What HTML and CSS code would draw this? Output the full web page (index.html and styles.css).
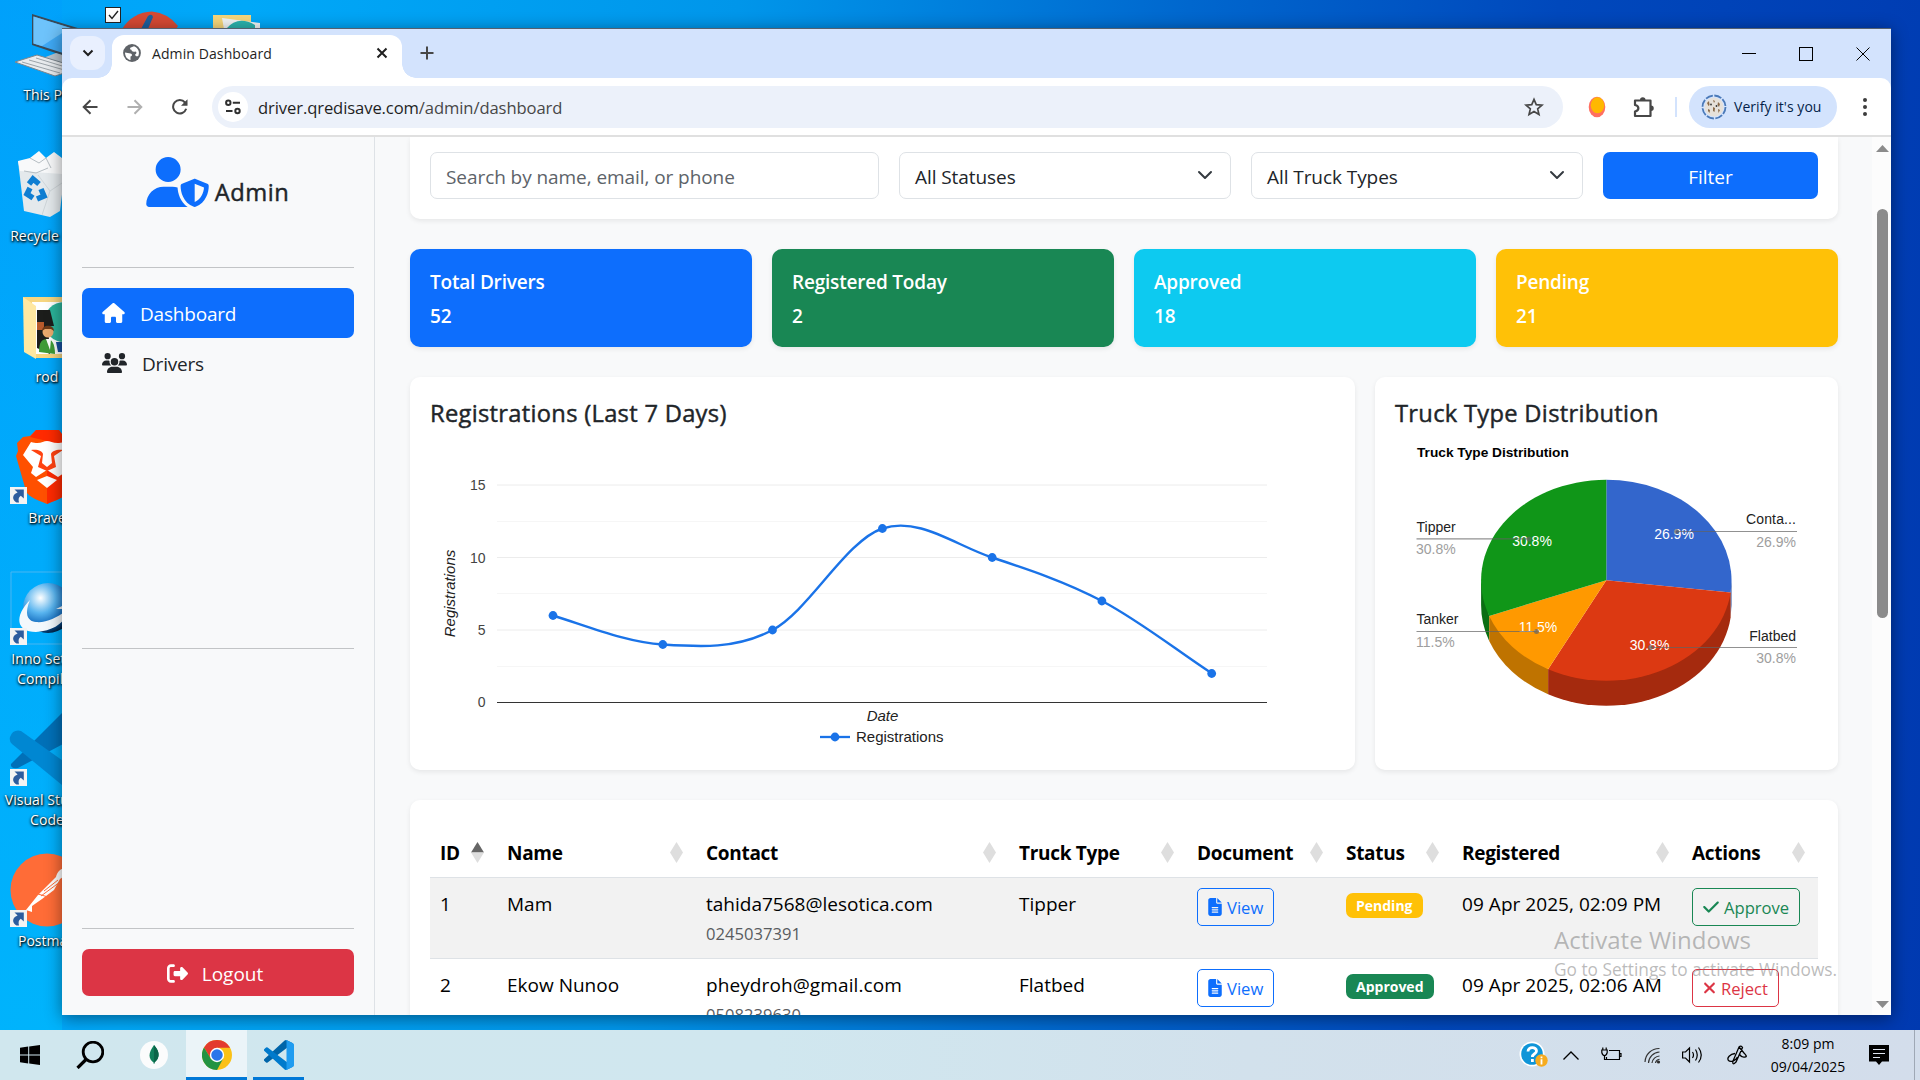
FILE: index.html
```html
<!DOCTYPE html>
<html lang="en">
<head>
<meta charset="utf-8">
<title>Admin Dashboard</title>
<link rel="stylesheet" href="styles.css">
</head>
<body>
<svg class="defs" aria-hidden="true">
  <symbol id="i-shortcut" viewBox="0 0 17 17"><rect width="17" height="17" fill="#f3f3f3"/><path d="M4.500 2.500H13.800V11.500L10.800 8.800C8.500 10.500 8.200 12.300 9 15.500H6.500C3.500 14 2 10.500 4.200 7.800C5 6.700 6.300 5.800 7.600 5.400Z" fill="#2d5c9e"/></symbol>
  <symbol id="i-file" viewBox="0 0 384 512"><path fill="currentColor" d="M64 0C28.700 0 0 28.700 0 64V448c0 35.300 28.700 64 64 64H320c35.300 0 64-28.700 64-64V160H256c-17.700 0-32-14.300-32-32V0H64zM256 0V128H384L256 0zM112 256H272c8.800 0 16 7.200 16 16s-7.200 16-16 16H112c-8.800 0-16-7.200-16-16s7.200-16 16-16zm0 64H272c8.800 0 16 7.200 16 16s-7.200 16-16 16H112c-8.800 0-16-7.200-16-16s7.200-16 16-16zm0 64H272c8.800 0 16 7.200 16 16s-7.200 16-16 16H112c-8.800 0-16-7.200-16-16s7.200-16 16-16z"/></symbol>
  <symbol id="i-sort" viewBox="0 0 13 21"><path fill="#dedede" d="M6.500 0L13 10.500L6.500 21L0 10.500z"/></symbol>
  <symbol id="i-chevron" viewBox="0 0 16 16"><path fill="none" stroke="#343a40" stroke-width="2" stroke-linecap="round" stroke-linejoin="round" d="m2 5 6 6 6-6"/></symbol>
  <symbol id="i-vscode" viewBox="0 0 100 100"><path fill="#0065a9" d="M96.500 10.700L75.900.8a6.200 6.200 0 0 0-7.100 1.200L1.300 63.600a4.200 4.200 0 0 0 0 6.200l5.500 5a4.200 4.200 0 0 0 5.300.2L93.400 13.400c2.700-2.100 6.600-.1 6.600 3.300z"/><path fill="#007acc" d="M96.500 89.300L75.900 99.200a6.200 6.200 0 0 1-7.100-1.200L1.300 36.400a4.200 4.200 0 0 1 0-6.200l5.500-5a4.200 4.200 0 0 1 5.300-.2l81.300 61.600c2.700 2.100 6.600.1 6.600-3.300z"/><path fill="#1f9cf0" d="M75.900 99.200a6.200 6.200 0 0 1-7.200-1.200c2.300 2.300 6.300.7 6.300-2.600V4.600c0-3.300-4-4.900-6.300-2.600a6.200 6.200 0 0 1 7.200-1.200l20.600 9.900A6.200 6.200 0 0 1 100 16.300v67.400a6.200 6.200 0 0 1-3.500 5.600z"/></symbol>
</svg>

<div class="desktop">
  <div class="shortcut" style="top:0">
    <svg class="art" width="94" height="80" viewBox="0 0 94 80"><path d="M32 14L94 33V66L32 45z" fill="#3b4a57"/><path d="M33.500 16.500L94 35V63L33.500 43.500z" fill="#3fa9f5"/><path d="M33.500 16.500L70 28L42 46L33.500 43.500z" fill="#6ec3fb"/><path d="M43 58L56 53L94 65V70z" fill="#b9c3cb"/><path d="M15 62L37 55L80 68L55 76z" fill="#e8ebee" stroke="#7d868d"/><path d="M22 62L60 73M29 60L68 71M36 58L72 69" stroke="#9ba3a9"/></svg>
    <span class="name">This PC</span>
  </div>
  <div class="shortcut" style="top:141px">
    <svg class="art" width="94" height="80" viewBox="0 0 94 80"><path d="M18 20L66 20L60 70L50 76L24 70z" fill="#e4e9ec"/><path d="M18 20L30 17L39 10L46 17L54 11L66 20L62 33L20 30z" fill="#f8f9fa"/><path d="M30 17L39 22L46 17L51 27M24 30L36 32L48 27" fill="none" stroke="#b6bec3"/><path d="M38 34L50 50L42 74M50 50L62 42" stroke="#cfd6da" fill="none"/><g fill="none" stroke="#0f7ed2" stroke-width="5.500"><path d="M29 43L33 38L39 43"/><path d="M41 48L44 55L37 58"/><path d="M33 57L27 53L30 47"/></g></svg>
    <span class="name">Recycle Bin</span>
  </div>
  <div class="shortcut" style="top:282px">
    <svg class="art" width="94" height="80" viewBox="0 0 94 80"><path d="M23 15H70V76H35z" fill="#f7d681"/><path d="M32 20H70V72H34z" fill="#fff"/><circle cx="64" cy="40" r="20" fill="#2bb39a"/><path d="M56 60H70V70H58z" fill="#164f9c"/><path d="M37 28L50 28L54 44H48L50 72L37 66z" fill="#1c1d1b"/><path d="M37 40h7v8h-7z" fill="#b65a2b"/><path d="M39 70C39 60 42 57 47 57S55 62 55 72z" fill="#3f9b37"/><path d="M46 57L50 68L51 57z" fill="#fff"/><circle cx="48" cy="50" r="5.500" fill="#e9a96d"/><path d="M42 49C42 42 54 42 54 49L51 47H45z" fill="#6d3b18"/><path d="M23 15L36 24V77L24 70z" fill="#ffe8a2"/></svg>
    <span class="name">rod</span>
  </div>
  <div class="shortcut" style="top:423px">
    <svg class="art" width="94" height="80" viewBox="0 0 94 80"><path d="M36 7H59L64 14L72 12L78 20L76 28L78 33L69 68C66 74 54 78 47 81C40 78 28 74 26 68L16 33L18 28L17 20L23 14L30 13z" fill="#ff5000"/><path d="M36 7H59L64 14L72 12L78 20L76 28L78 33L69 68C66 74 54 78 47 81V18L30 14z" fill="#ff2000" opacity=".8"/><path d="M31 19C40 22 43 18 47 18S55 22 64 19L71 32L62 44L64 50L58 54L47 47L36 54L31 50L33 44L23 32z" fill="#fff"/><path d="M31 27C38 26 42 28 43 31L42 40L47 44L52 40L51 31C52 28 57 26 63 27L54 33L56 44L47 48L38 44L41 33z" fill="#ff4210"/><path d="M44 30H51L49 40L47 42L44 40z" fill="#fff"/><path d="M37 57L47 53L57 57L47 65z" fill="#fff"/></svg>
    <svg class="arrow"><use href="#i-shortcut"/></svg>
    <span class="name">Brave</span>
  </div>
  <div class="shortcut" style="top:564px">
    <svg class="art" width="94" height="80" viewBox="0 0 94 80"><defs><radialGradient id="orb" cx=".35" cy=".3" r=".75"><stop offset="0" stop-color="#fff"/><stop offset=".4" stop-color="#58b4ef"/><stop offset=".75" stop-color="#0a62b8"/><stop offset="1" stop-color="#001c38"/></radialGradient></defs><path d="M11 8H94M11 8V80H94" fill="none" stroke="#49b6f2"/><circle cx="48" cy="44" r="25" fill="url(#orb)"/><path d="M30 36C14 52 16 68 36 68C52 67 62 60 66 52L62 45H56L66 40V47C56 54 46 59 36 58C26 57 25 48 30 36z" fill="#f3f8fc"/></svg>
    <svg class="arrow"><use href="#i-shortcut"/></svg>
    <span class="name">Inno Setup<br>Compiler</span>
  </div>
  <div class="shortcut" style="top:705px">
    <svg class="art" width="94" height="80" viewBox="0 0 94 80"><path d="M11 59L62 8L80 16V30L18 63Q10 64 11 59z" fill="#0070b8"/><path d="M10 32Q13 24 21 26L80 68V84L62 80L12 39Q9 36 10 32z" fill="#0087d2"/></svg>
    <svg class="arrow"><use href="#i-shortcut"/></svg>
    <span class="name">Visual Studio<br>Code</span>
  </div>
  <div class="shortcut" style="top:846px">
    <svg class="art" width="94" height="80" viewBox="0 0 94 80"><circle cx="47" cy="44" r="36.500" fill="#ff6c37"/><path d="M26 64L38 49L56 31C58 22 66 20 72 25L60 33L54 44L42 53L32 60L32 66z" fill="#fff"/><path d="M38 48L48 51M44 45L58 34M41 50L60 36" stroke="#ff6c37" fill="none"/></svg>
    <svg class="arrow"><use href="#i-shortcut"/></svg>
    <span class="name">Postman</span>
  </div>
  <svg class="behind" width="180" height="29" viewBox="0 0 180 29"><rect x="5.500" y="7.500" width="15" height="15" fill="#fff" stroke="#222"/><path d="M9 15L12 18.500L18 11" fill="none" stroke="#222" stroke-width="1.400"/><path d="M22 29Q33 12 52 11.500Q68 13 78 26L76 29z" fill="#d64a34"/><path d="M48 16Q52 13 53 17L48 29H41z" fill="#1b5f9e"/><path d="M113 15H151V29H113z" fill="#f5d67b"/><path d="M122 18L160 23V29H124z" fill="#f2f4f5"/><path d="M126 29Q138 15 155 25V29z" fill="#2ab3ae"/></svg>
</div>

<div class="window">
  <div class="tabstrip">
    <div class="tab-search"><svg width="12" height="8" viewBox="0 0 12 8"><path d="M1.500 1.500L6 6L10.500 1.500" fill="none" stroke="#1f1f1f" stroke-width="2"/></svg></div>
    <div class="tab">
      <svg width="18" height="18" viewBox="0 0 18 18"><circle cx="9" cy="9" r="8.900" fill="#5f6368"/><path d="M2 8.500L7.500 9.500C9.500 10 9.500 12 7.500 12.500V16C4 15.500 2 12 2 8.500zM11 2.300L8.500 3.200C6.500 3.500 6.800 5.700 8.500 5.800C8.500 8 11 8 12.500 7.500C14 8 13.500 10 12 10.500C12.500 12.500 14 12.500 15.300 12C17 8.500 15.500 4 11 2.300z" fill="#fff"/></svg>
      <span class="tab-title">Admin Dashboard</span>
      <svg width="12" height="12" viewBox="0 0 12 12"><path d="M1.500 1.500L10.500 10.500M10.500 1.500L1.500 10.500" stroke="#1f1f1f" stroke-width="2"/></svg>
    </div>
    <svg class="new-tab" width="14" height="14" viewBox="0 0 14 14"><path d="M7 .5V13.500M.5 7H13.500" stroke="#474747" stroke-width="2"/></svg>
    <div class="controls">
      <svg width="14" height="14"><path d="M0 6.500H14" stroke="#000"/></svg>
      <svg width="14" height="14"><rect x=".5" y=".5" width="13" height="13" fill="none" stroke="#000"/></svg>
      <svg width="14" height="14"><path d="M.5 .5L13.500 13.500M13.500 .5L.5 13.500" stroke="#000"/></svg>
    </div>
  </div>

  <div class="toolbar">
    <div class="nav">
      <svg width="16" height="16" viewBox="0 0 16 16"><path d="M15.500 8H2M8.500 1.200L1.700 8L8.500 14.800" fill="none" stroke="#474747" stroke-width="2"/></svg>
      <svg width="16" height="16" viewBox="0 0 16 16"><path d="M.5 8H14M7.500 1.200L14.300 8L7.500 14.800" fill="none" stroke="#b0b0b0" stroke-width="2"/></svg>
      <svg width="16" height="16" viewBox="0 0 16 16"><path d="M14.200 9.800A6.700 6.700 0 1 1 13 3.500L14.500 5.500" fill="none" stroke="#474747" stroke-width="2"/><path d="M15.500 .3V6.800H9z" fill="#474747"/></svg>
    </div>
    <div class="omnibox">
      <div class="site-info"><svg width="16" height="16" viewBox="0 0 16 16" fill="none" stroke="#303030" stroke-width="2"><circle cx="3.300" cy="3.700" r="2.200"/><path d="M7.800 3.700H15M1 12H7.500"/><circle cx="12.500" cy="12" r="2.200"/></svg></div>
      <span class="url">driver.qredisave.com<span>/admin/dashboard</span></span>
      <svg width="20" height="20" viewBox="0 0 24 24"><path d="M12 2.800L14.700 9.200L21.600 9.800L16.400 14.300L18 21L12 17.400L6 21L7.600 14.300L2.400 9.800L9.300 9.200z" fill="none" stroke="#474747" stroke-width="2"/></svg>
    </div>
    <svg class="ext" width="18" height="22" viewBox="0 0 18 22"><ellipse cx="9" cy="11" rx="8.300" ry="10.300" fill="#ff6f61"/><ellipse cx="9.500" cy="9.300" rx="6.800" ry="8" fill="#ffb800"/></svg>
    <svg class="puzzle" width="22" height="22" viewBox="0 0 22 22"><path d="M2 4.500H17.500V20H2V15.500C6.500 14.500 6.500 10 2 9z" fill="none" stroke="#474747" stroke-width="2.200" stroke-linejoin="round"/><path d="M7 4A2.700 2.700 0 0 1 12.500 4zM18 9.500A2.700 2.700 0 0 1 18 15z" fill="#474747"/></svg>
    <i class="sep"></i>
    <div class="profile">
      <svg width="26" height="26" viewBox="0 0 26 26"><circle cx="13" cy="13" r="9.500" fill="#e6e1da"/><path d="M6 9L8 7L8.500 11L7.500 12zM12 6L14 7L13 9zM17 8L19 10L18 13L16.500 11zM7 15L9 16L8.500 19L7 17zM12 13L14 14L13.500 18L12 17zM17 15L19 16L17.500 19z" fill="#8a6a49"/><circle cx="10" cy="10.500" r=".9" fill="#333"/><circle cx="15.500" cy="12" r=".9" fill="#333"/><circle cx="13" cy="13" r="11.500" fill="none" stroke="#4a79b8" stroke-width="1.800" stroke-dasharray="7.500 1.530"/></svg>
      <span>Verify it's you</span>
    </div>
    <svg class="kebab" width="4" height="18" viewBox="0 0 4 18" fill="#3c3c3c"><circle cx="2" cy="2" r="2"/><circle cx="2" cy="9" r="2"/><circle cx="2" cy="16" r="2"/></svg>
  </div>

  <div class="page">
    <aside class="sidebar">
      <div class="brand">
        <svg width="63" height="50" viewBox="0 0 640 512"><path fill="#0d6efd" d="M224 256A128 128 0 1 0 224 0a128 128 0 1 0 0 256zm-45.700 48C79.800 304 0 383.800 0 482.300C0 498.700 13.300 512 29.700 512H418.300c1.800 0 3.500-.2 5.300-.5c-76.300-55.100-99.800-141-103.100-200.200c-16.100-4.800-33.100-7.300-50.700-7.300H178.300zm308.800-78.300l-120 48C358 277.400 352 286.200 352 296c0 63.300 25.900 168.800 134.800 214.200c5.900 2.500 12.600 2.500 18.500 0C614.100 464.800 640 359.300 640 296c0-9.800-6-18.600-15.100-22.300l-120-48c-5.700-2.300-12.100-2.300-17.800 0zM591.400 312c-3.900 50.700-27.200 116.700-95.400 149.700V273.800L591.400 312z"/></svg>
        <span>Admin</span>
      </div>
      <hr>
      <nav class="menu">
        <a class="active"><svg width="23" height="20" viewBox="0 0 576 512"><path fill="currentColor" d="M575.800 255.500c0 18-15 32.100-32 32.100h-32l.7 160.200c0 2.700-.2 5.400-.5 8.100V472c0 22.100-17.900 40-40 40H456c-1.100 0-2.200 0-3.300-.1c-1.400 .1-2.800 .1-4.200 .1H416 392c-22.100 0-40-17.900-40-40V448 384c0-17.700-14.300-32-32-32H256c-17.700 0-32 14.300-32 32v64 24c0 22.100-17.900 40-40 40H160 128.100c-1.500 0-3-.1-4.500-.2c-1.200 .1-2.400 .2-3.600 .2H104c-22.100 0-40-17.900-40-40V360c0-.9 0-1.900 .1-2.800V287.600H32c-18 0-32-14-32-32.100c0-9 3-17 10-24L266.400 8c7-7 15-8 22-8s15 2 21 7L564.800 231.500c8 7 12 15 11 24z"/></svg>Dashboard</a>
        <a><svg width="25" height="20" viewBox="0 0 640 512"><path fill="#212529" d="M144 0a80 80 0 1 1 0 160A80 80 0 1 1 144 0zM512 0a80 80 0 1 1 0 160A80 80 0 1 1 512 0zM0 298.700C0 239.800 47.800 192 106.700 192h42.700c15.900 0 31 3.500 44.600 9.700c-1.300 7.200-1.900 14.700-1.900 22.300c0 38.200 16.800 72.500 43.300 96c-.2 0-.4 0-.7 0H21.300C9.600 320 0 310.400 0 298.700zM405.300 320c-.2 0-.4 0-.7 0c26.600-23.500 43.300-57.800 43.300-96c0-7.600-.7-15-1.900-22.300c13.600-6.300 28.700-9.700 44.600-9.700h42.700C592.200 192 640 239.800 640 298.700c0 11.800-9.600 21.300-21.300 21.300H405.300zM224 224a96 96 0 1 1 192 0 96 96 0 1 1 -192 0zM128 485.300C128 411.700 187.700 352 261.300 352H378.700C452.300 352 512 411.700 512 485.300c0 14.700-11.900 26.700-26.700 26.700H154.700c-14.700 0-26.700-11.900-26.700-26.700z"/></svg>Drivers</a>
      </nav>
      <hr class="mid">
      <hr class="low">
      <button class="logout"><svg width="21" height="21" viewBox="0 0 512 512"><path fill="#fff" d="M377.900 105.900L500.700 228.700c7.200 7.200 11.300 17.100 11.300 27.300s-4.100 20.100-11.300 27.300L377.900 406.100c-6.400 6.400-15 9.900-24 9.900c-18.700 0-33.900-15.200-33.900-33.900l0-62.100-128 0c-17.700 0-32-14.300-32-32l0-64c0-17.700 14.300-32 32-32l128 0 0-62.100c0-18.700 15.200-33.900 33.900-33.900c9 0 17.600 3.600 24 9.900zM160 96L96 96c-17.700 0-32 14.300-32 32l0 256c0 17.700 14.300 32 32 32l64 0c17.700 0 32 14.300 32 32s-14.300 32-32 32l-64 0c-53 0-96-43-96-96L0 128C0 75 43 32 96 32l64 0c17.700 0 32 14.300 32 32s-14.300 32-32 32z"/></svg>Logout</button>
    </aside>

    <main class="main">
      <section class="card filters">
        <div class="field search">Search by name, email, or phone</div>
        <div class="field">All Statuses<svg width="16" height="16"><use href="#i-chevron"/></svg></div>
        <div class="field">All Truck Types<svg width="16" height="16"><use href="#i-chevron"/></svg></div>
        <button class="filter-btn">Filter</button>
      </section>

      <section class="stats">
        <div class="stat blue"><span>Total Drivers</span><span>52</span></div>
        <div class="stat green"><span>Registered Today</span><span>2</span></div>
        <div class="stat cyan"><span>Approved</span><span>18</span></div>
        <div class="stat amber"><span>Pending</span><span>21</span></div>
      </section>

      <section class="charts">
        <div class="card chart">
          <h5>Registrations (Last 7 Days)</h5>
          <svg width="905" height="313" viewBox="430 437 905 313">
            <g stroke="#ececec"><path d="M497 485H1267M497 557.500H1267M497 630H1267"/></g>
            <g stroke="#f6f6f6"><path d="M497 521.500H1267M497 593.500H1267M497 666.500H1267"/></g>
            <path d="M497 702.500H1267" stroke="#333" stroke-width="1.200"/>
            <path d="M553 615.500C589.600 627 626.400 642.100 663 644.500C699.600 646.900 735.900 649.300 772.500 630C809.100 610.700 845.900 540.600 882.500 528.500C919 516.400 955.400 545.400 992 557.500C1028.600 569.500 1065.400 581.700 1102 601C1138.700 620.300 1175.300 649.300 1212 673.500" fill="none" stroke="#1a73e8" stroke-width="2.400"/>
            <g fill="#1a73e8"><circle cx="553" cy="615.500" r="4.400"/><circle cx="662.800" cy="644.500" r="4.400"/><circle cx="772.500" cy="630" r="4.400"/><circle cx="882.400" cy="528.500" r="4.400"/><circle cx="992.200" cy="557.500" r="4.400"/><circle cx="1101.900" cy="601" r="4.400"/><circle cx="1211.700" cy="673.500" r="4.400"/></g>
            <g class="axis" text-anchor="end"><text x="485.500" y="490">15</text><text x="485.500" y="562.500">10</text><text x="485.500" y="635">5</text><text x="485.500" y="707">0</text></g>
            <g class="lbl ital" text-anchor="middle"><text x="882.500" y="721">Date</text><text transform="translate(455 593.500) rotate(-90)">Registrations</text></g>
            <path d="M820 737H850" stroke="#1a73e8" stroke-width="2.300"/><circle cx="835" cy="737" r="4.400" fill="#1a73e8"/>
            <text class="lbl" x="856" y="742">Registrations</text>
          </svg>
        </div>
        <div class="card pie">
          <h5>Truck Type Distribution</h5>
          <svg width="423" height="313" viewBox="1395.500 437 423 313">
            <path d="M1481.600 580V605A125.200 100.500 0 0 0 1489.700 641V616z" fill="#0b6e13"/>
            <path d="M1732 580V605L1731.100 617V592z" fill="#264d99"/>
            <path d="M1489.700 615.900V640.900A125.200 100.500 0 0 0 1548.600 694.300V669.300z" fill="#bf7300"/>
            <path d="M1548.600 669.300V694.300A125.200 100.500 0 0 0 1731.100 617.400V592.400z" fill="#a52a0e"/>
            <path d="M1606.800 580.300V479.800A125.200 100.500 0 0 1 1731.100 592.400z" fill="#36c"/>
            <path d="M1606.800 580.300L1731.100 592.400A125.200 100.500 0 0 1 1548.600 669.300z" fill="#dc3912"/>
            <path d="M1606.800 580.300L1548.600 669.300A125.200 100.500 0 0 1 1489.700 615.900z" fill="#f90"/>
            <path d="M1606.800 580.300L1489.700 615.900A125.200 100.500 0 0 1 1606.800 479.800z" fill="#109618"/>
            <text class="pt bold" x="1417.500" y="457">Truck Type Distribution</text>
            <g class="pt white" text-anchor="middle"><text x="1532.500" y="546">30.8%</text><text x="1674.500" y="539">26.9%</text><text x="1538.500" y="632">11.5%</text><text x="1650" y="650">30.8%</text></g>
            <g stroke="#636363" stroke-opacity=".7" stroke-width="1.200" fill="none"><path d="M1417 538.800H1529M1417 631.500H1537M1677 531.500H1797.500M1651 647.500H1797.500"/></g>
            <g fill="#636363" fill-opacity=".7"><circle cx="1529.500" cy="539" r="2.500"/><circle cx="1537" cy="631.500" r="2.500"/><circle cx="1677" cy="531.500" r="2.500"/><circle cx="1651" cy="647.500" r="2.500"/></g>
            <g class="pt"><text x="1417" y="532">Tipper</text><text x="1417" y="624">Tanker</text><text x="1796.500" y="524" text-anchor="end" textLength="50">Conta...</text><text x="1796.500" y="641" text-anchor="end">Flatbed</text></g>
            <g class="pt grey"><text x="1416.500" y="554">30.8%</text><text x="1416.500" y="647">11.5%</text><text x="1796.500" y="547" text-anchor="end">26.9%</text><text x="1796.500" y="663" text-anchor="end">30.8%</text></g>
          </svg>
        </div>
      </section>

      <section class="card listing">
        <div class="row head">
          <span>ID<svg class="sort" viewBox="0 0 13 21"><path d="M6.500 0L13 10.500H0z" fill="#666"/><path d="M0 10.500H13L6.500 21z" fill="#dedede"/></svg></span>
          <span>Name<svg class="sort"><use href="#i-sort"/></svg></span>
          <span>Contact<svg class="sort"><use href="#i-sort"/></svg></span>
          <span>Truck Type<svg class="sort"><use href="#i-sort"/></svg></span>
          <span>Document<svg class="sort"><use href="#i-sort"/></svg></span>
          <span>Status<svg class="sort"><use href="#i-sort"/></svg></span>
          <span>Registered<svg class="sort"><use href="#i-sort"/></svg></span>
          <span>Actions<svg class="sort"><use href="#i-sort"/></svg></span>
        </div>
        <div class="row odd">
          <span>1</span><span>Mam</span>
          <span><span class="mail">tahida7568@lesotica.com</span><small>0245037391</small></span>
          <span>Tipper</span>
          <span><a class="btn view"><svg width="14" height="18"><use href="#i-file"/></svg>View</a></span>
          <span><b class="badge amber">Pending</b></span>
          <span class="date">09 Apr 2025, 02:09 PM</span>
          <span><a class="btn ok"><svg width="16" height="18" viewBox="0 0 448 512"><path fill="currentColor" d="M438.600 105.400c12.500 12.500 12.500 32.800 0 45.300l-256 256c-12.500 12.500-32.800 12.500-45.300 0l-128-128c-12.500-12.500-12.500-32.800 0-45.300s32.800-12.500 45.300 0L160 338.700 393.400 105.400c12.500-12.500 32.800-12.500 45.300 0z"/></svg>Approve</a></span>
        </div>
        <div class="row">
          <span>2</span><span>Ekow Nunoo</span>
          <span><span class="mail wide">pheydroh@gmail.com</span><small>0508239630</small></span>
          <span>Flatbed</span>
          <span><a class="btn view"><svg width="14" height="18"><use href="#i-file"/></svg>View</a></span>
          <span><b class="badge green">Approved</b></span>
          <span class="date">09 Apr 2025, 02:06 AM</span>
          <span><a class="btn no"><svg width="13" height="18" viewBox="0 0 384 512"><path fill="currentColor" d="M342.600 150.600c12.500-12.500 12.500-32.800 0-45.300s-32.800-12.500-45.300 0L192 210.700 86.600 105.400c-12.500-12.500-32.800-12.500-45.300 0s-12.500 32.800 0 45.300L146.700 256 41.400 361.400c-12.500 12.500-12.500 32.800 0 45.300s32.800 12.500 45.300 0L192 301.300 297.400 406.600c12.500 12.500 32.800 12.500 45.300 0s12.500-32.800 0-45.300L237.300 256 342.600 150.600z"/></svg>Reject</a></span>
        </div>
      </section>
    </main>

    <div class="scrollbar">
      <svg width="13" height="7"><path d="M6.500 0L13 7H0z" fill="#8b8b8b"/></svg>
      <i></i>
      <svg width="13" height="7"><path d="M0 0H13L6.500 7z" fill="#8b8b8b"/></svg>
    </div>
  </div>
</div>

<div class="watermark"><p>Activate Windows</p><p>Go to Settings to activate Windows.</p></div>

<footer class="taskbar">
  <div class="task start"><svg width="20" height="20" viewBox="0 0 20 20"><path d="M0 2.800L8.200 1.600V9.400H0zM9.200 1.400L20 0V9.400H9.200zM0 10.400H8.200V18.400L0 17.200zM9.200 10.400H20V20L9.200 18.500z"/></svg></div>
  <div class="task find"><svg width="28" height="28" viewBox="0 0 28 28" fill="none" stroke="#000"><circle cx="17" cy="11" r="9.800" stroke-width="2.800"/><path d="M10 18.500L1.500 27" stroke-width="3.200"/></svg></div>
  <div class="task mongo"><svg width="28" height="28" viewBox="0 0 28 28"><circle cx="14" cy="14" r="14" fill="#fbfcfc"/><path d="M14 4C18 8.500 19 12 18.500 15C18 18.500 16 20 14.500 21.500L14.200 23H13.800L13.500 21.500C11.500 20 9.500 18 9.500 14.500S11.500 7.500 14 4z" fill="#10805a"/><path d="M14 4C18 8.500 19 12 18.500 15C18 18.500 16 20 14.500 21.500L14 23z" fill="#0b6548"/></svg></div>
  <div class="task chrome"><svg width="30" height="30" viewBox="0 0 48 48"><circle cx="24" cy="24" r="24" fill="#fbc116"/><path d="M24 12.500H45A24 24 0 0 0 3.200 12L14 29.700z" fill="#e33b2e"/><path d="M3.200 12A24 24 0 0 0 24 48L34 29.700H14z" fill="#229342"/><circle cx="24" cy="24" r="11.500" fill="#fff"/><circle cx="24" cy="24" r="9.200" fill="#2a75ea"/></svg></div>
  <div class="task code"><svg width="30" height="30"><use href="#i-vscode"/></svg></div>
  <div class="tray">
    <svg class="help" width="30" height="28" viewBox="0 0 30 28"><circle cx="13" cy="13" r="12.500" fill="#fff"/><circle cx="13" cy="13" r="10.800" fill="#0f95d8"/><path d="M9 10.500C9 5.500 17.500 5.500 17.500 10C17.500 13 13.400 12.500 13.400 16M13.400 18V21" fill="none" stroke="#fff" stroke-width="2.800"/><circle cx="22.500" cy="19.500" r="6.200" fill="#f6ab1e"/><path d="M22.500 15.500V17.200M22.500 18.300V23.500" stroke="#fff" stroke-width="1.800"/></svg>
    <svg class="t2" width="16" height="9" viewBox="0 0 16 9"><path d="M.5 8.500L8 1L15.500 8.500" fill="none" stroke="#000" stroke-width="1.300"/></svg>
    <svg class="t3" width="21" height="16" viewBox="0 0 21 16" fill="none" stroke="#000" stroke-width="1.200"><path d="M8 3.500H18.500V12.500H5.500V10M18.500 6.500H20V9.500H18.500M1.800 .5V3M5.200 .5V3M3.500 8.500V12.500H6"/><path d="M.8 3H6.200V5.500Q5.500 8.500 3.500 8.500T.8 5.500z"/></svg>
    <svg class="t4" width="17" height="17" viewBox="0 0 17 17" fill="none" stroke="#333" stroke-width="1.200"><path d="M1 15A14 14 0 0 1 15.500 1.500M4.500 16A11.500 11.500 0 0 1 15.500 5M8 16A8 8 0 0 1 15.500 9M11.500 16A4.500 4.500 0 0 1 15.500 12.300"/><circle cx="14.500" cy="15" r="1" fill="#000"/></svg>
    <svg class="t5" width="21" height="18" viewBox="0 0 21 18" fill="none" stroke="#000" stroke-width="1.200"><path d="M.6 6H3.500L7.500 2V16L3.500 12H.6zM10.500 6Q12.500 9 10.500 12M13.500 3.500Q17 9 13.500 14.500M16.500 1.500Q22 9 16.500 16.500"/></svg>
    <svg class="t6" width="21" height="20" viewBox="0 0 21 20" fill="none" stroke="#000" stroke-width="1.300"><path d="M6 16L12 2Q14 0 15.500 2.500L9 17Q5 21 6 16zM12 2L17 8Q21 12 18 12Q15 13 12 9M8 8.500C3 9 -.5 13 1.500 15.500C4 18 9 15 10.500 12"/></svg>
    <div class="clock"><span>8:09 pm</span><span>09/04/2025</span></div>
    <svg class="note" width="20" height="20" viewBox="0 0 20 20"><path d="M0 0H20V16.500H13L10 20L7 16.500H0z"/><path d="M4 4.500H16M4 8.500H16M4 12.500H11" stroke="#dde3ee" stroke-width="1.200"/></svg>
    <i class="peek"></i>
  </div>
</footer>
</body>
</html>
```
FILE: styles.css
```css
* { box-sizing: border-box; }
body {
  margin: 0;
  width: 1920px;
  height: 1080px;
  overflow: hidden;
  position: relative;
  font-family: "Open Sans", "Noto Sans", sans-serif;
  font-size: 19px;
  color: #212529;
  background: linear-gradient(97deg, #00a3fa 0%, #00a8f8 12%, #0096ea 36%, #0067ce 58%, #0048bc 76%, #0039b0 100%);
}
svg { display: block; flex: none; }
.defs { position: absolute; width: 0; height: 0; }
i { display: block; }
button { border: 0; font: inherit; }

/* Desktop */
.desktop { position: absolute; inset: 0 0 50px 0; background: linear-gradient(180deg, rgba(0,150,255,.2), rgba(0,190,255,.55)) 0 0 / 62px 100% no-repeat; }
.shortcut { position: absolute; left: 0; width: 94px; }
.art { margin-bottom: 5px; overflow: visible; }
.arrow { position: absolute; left: 10px; top: 64px; width: 17px; height: 17px; }
.name { display: block; margin: 0 -20px; text-align: center; color: #fff; font-size: 14px; line-height: 20px; letter-spacing: .05px; text-shadow: 1px 1px 2px #000, 0 1px 3px #000; }
.behind { position: absolute; left: 100px; top: 0; }

/* Browser window */
.window {
  position: absolute;
  left: 62px;
  top: 28px;
  width: 1829px;
  height: 987px;
  border-top: 1px solid #55606e;
  background: #d3e3fd;
  box-shadow: 0 3px 16px rgba(0,0,0,.45);
  display: flex;
  flex-direction: column;
}
.tabstrip { height: 49px; display: flex; align-items: flex-start; padding: 6px 21px 0 8px; flex: none; }
.tab-search { width: 35px; height: 34px; margin: 1px 7px 0 0; border-radius: 12px; background: #e9f0fe; display: flex; align-items: center; justify-content: center; }
.tab { position: relative; width: 290px; height: 43px; background: #fff; border-radius: 12px 12px 0 0; display: flex; align-items: center; padding: 0 14px 7px 11px; }
.tab::before, .tab::after { content: ""; position: absolute; bottom: 0; width: 14px; height: 14px; }
.tab::before { left: -14px; background: radial-gradient(circle at 0 0, transparent 13.5px, #fff 14px); }
.tab::after { right: -14px; background: radial-gradient(circle at 100% 0, transparent 13.5px, #fff 14px); }
.tab-title { margin-left: 11px; padding-top: 2px; flex: 1; font-size: 14px; line-height: 20px; letter-spacing: .1px; color: #1f1f1f; }
.new-tab { margin: 11px 0 0 18px; }
.controls { margin: 12px 0 0 auto; display: flex; gap: 43px; }
.toolbar { height: 59px; flex: none; background: #fff; border-bottom: 2px solid #e0e0e0; border-radius: 10px 10px 0 0; display: flex; align-items: center; padding: 0 24px 0 20px; }
.nav { display: flex; gap: 29px; width: 130px; }
.omnibox { width: 1351px; height: 42px; border-radius: 21px; background: #ecf1fa; display: flex; align-items: center; padding: 0 19px 0 6px; }
.site-info { width: 30px; height: 30px; border-radius: 50%; background: #fff; display: flex; align-items: center; justify-content: center; }
.url { flex: 1; margin-left: 10px; padding-top: 2px; font-size: 16.600px; line-height: 24px; color: #1f1f1f; letter-spacing: -.1px; }
.url span { color: #474747; }
.ext { margin-left: 25px; }
.puzzle { margin-left: 27px; }
.sep { width: 2px; height: 20px; background: #d3e3fd; margin: 0 12px 0 20px; }
.profile { width: 148px; height: 42px; border-radius: 21px; background: #d3e3fd; display: flex; align-items: center; gap: 7px; padding-left: 12px; font-size: 14px; letter-spacing: .05px; color: #041e49; white-space: nowrap; }
.kebab { margin-left: auto; }

/* Dashboard page */
.page { flex: 1; min-height: 0; display: flex; background: #f8f9fa; overflow: hidden; }
.sidebar { width: 313px; flex: none; border-right: 1px solid #dee2e6; padding: 20px 20px 0; display: flex; flex-direction: column; }
.brand { display: flex; justify-content: center; gap: 6px; height: 110px; font-size: 23.700px; padding-right: 1px; letter-spacing: .5px; -webkit-text-stroke: .45px currentColor; }
.brand span { line-height: 36px; margin-top: 17px; }
hr { width: 100%; height: 1px; border: 0; margin: 0; background: #c2c4c6; }
.menu { margin-top: 20px; height: 360px; }
.menu a { height: 50px; display: flex; align-items: center; gap: 15px; padding: 2px 0 0 20px; border-radius: 7px; color: #212529; letter-spacing: -.2px; }
.menu svg, .logout svg { margin-top: -2px; }
.menu .active { background: #0d6efd; color: #fff; }
.low { margin-top: 279px; }
.logout { margin-top: 20px; height: 47px; border-radius: 7px; background: #dc3545; color: #fff; display: flex; align-items: center; justify-content: center; gap: 14px; flex: none; padding: 3px 6px 0 0; }

.main { flex: 1; min-width: 0; padding: 0 34px 0 35px; display: flex; flex-direction: column; gap: 30px; }
.card { background: #fff; border-radius: 10px; box-shadow: 0 2px 5px rgba(0,0,0,.075); }
.filters { height: 82px; flex: none; border-radius: 0 0 10px 10px; display: grid; grid-template-columns: 449px 332px 332px 215px; gap: 20px; padding: 15px 20px 20px; }
.field { height: 47px; border: 1px solid #dee2e6; border-radius: 7px; padding: 2px 17px 0 15px; display: flex; align-items: center; justify-content: space-between; white-space: nowrap; background: #fff; letter-spacing: -.07px; }
.field svg { margin-top: -3px; }
.search { color: #5d6369; }
.filter-btn { height: 47px; background: #0d6efd; color: #fff; border-radius: 7px; padding: 3px 0 0; }

.stats { display: grid; grid-template-columns: repeat(4, 1fr); gap: 20px; height: 98px; flex: none; }
.stat { border-radius: 10px; color: #fff; font-weight: 600; letter-spacing: -.2px; padding: 16px 20px 0; display: flex; flex-direction: column; line-height: 34px; box-shadow: 0 2px 5px rgba(0,0,0,.075); }
.blue { background: #0d6efd; }
.green { background: #198754; }
.cyan { background: #0dcaf0; }
.amber { background: #ffc107; }

.charts { display: grid; grid-template-columns: 945px 463px; gap: 20px; height: 393px; flex: none; }
.charts .card { padding: 20px; }
h5 { margin: 0 0 10px; padding-top: 1px; height: 30px; font-size: 23.700px; line-height: 30px; font-weight: 400; -webkit-text-stroke: .45px currentColor; letter-spacing: .3px; white-space: nowrap; }
.chart text, .pie text { font-family: "Liberation Sans", Arial, sans-serif; }
.axis { font-size: 14px; fill: #444; }
.lbl { font-size: 15px; fill: #222; }
.ital { font-style: italic; }
.pt { font-size: 14px; fill: #222; }
.bold { font-weight: 700; fill: #000; font-size: 13.700px; }
.white { fill: #fff; }
.grey { fill: #9e9e9e; }

.listing { flex: none; height: 300px; padding: 27px 20px 0; color: #000; }
.row { display: grid; grid-template-columns: 67px 199px 313px 178px 149px 116px 230px 136px; height: 81px; border-bottom: 1px solid #dee2e6; line-height: 30px; white-space: nowrap; }
.row > span { padding: 11px 0 0 10px; }
.head { height: 51px; font-weight: 700; letter-spacing: -.3px; }
.head > span { display: flex; justify-content: space-between; padding-right: 13px; }
.sort { width: 13px; height: 21px; margin-top: 4px; }
.odd { background: #f2f2f2; }
.mail, .row small { display: block; }
.wide { letter-spacing: .1px; }
.date { letter-spacing: .05px; }
.row small { font-size: 16.600px; color: #595c5f; }
.btn { display: inline-flex; align-items: center; height: 38px; margin-top: -1px; border: 1px solid; border-radius: 5px; padding: 2px 10px 0; gap: 5px; font-size: 16.600px; vertical-align: top; }
.btn svg { margin-top: -2px; }
.view { color: #0d6efd; }
.ok { color: #198754; }
.no { color: #dc3545; }
.badge { display: inline-block; margin-top: 4px; height: 25px; line-height: 26px; padding: 0 10px; border-radius: 7px; color: #fff; font-size: 14px; vertical-align: top; }

.scrollbar { width: 19px; flex: none; background: #fcfcfc; display: flex; flex-direction: column; align-items: center; padding: 8px 0 7px 2px; }
.scrollbar i { width: 11px; height: 409px; margin: 57px 0 auto; border-radius: 6px; background: #8b8b8b; }

/* Activation notice over everything */
.watermark { position: absolute; left: 1554px; top: 922px; color: rgba(120,120,120,.5); white-space: nowrap; }
.watermark p { margin: 0; font-size: 17.300px; line-height: 24px; }
.watermark p:first-child { font-size: 24px; line-height: 36px; }

/* Taskbar */
.taskbar { position: absolute; left: 0; right: 0; bottom: 0; height: 50px; display: flex; background: linear-gradient(90deg, #d0e7ee 0%, #d0e7ef 40%, #d2e1ec 65%, #d3ddeb 100%); }
.task { display: flex; align-items: center; justify-content: center; width: 62px; }
.start { width: 60px; }
.find { width: 60px; }
.mongo { width: 68px; }
.chrome { width: 61px; margin-left: -2px; background: #ebf4f8; border-bottom: 3px solid #0078d7; padding-top: 3px; }
.code { width: 51px; margin-left: 6px; border-bottom: 3px solid #0078d7; padding-top: 3px; }
.tray { margin-left: auto; display: flex; align-items: center; }
.help { margin-right: 14px; }
.t2 { margin-right: 22px; }
.t3 { margin-right: 22px; }
.t4 { margin-right: 21px; }
.t5 { margin-right: 24px; }
.t6 { margin-right: 14px; }
.clock { width: 92px; text-align: center; font-size: 14px; line-height: 23px; color: #000; display: flex; flex-direction: column; margin-right: 15px; }
.note { margin-right: 25px; }
.peek { width: 6px; height: 50px; border-left: 1px solid #9fa8b5; }
```
